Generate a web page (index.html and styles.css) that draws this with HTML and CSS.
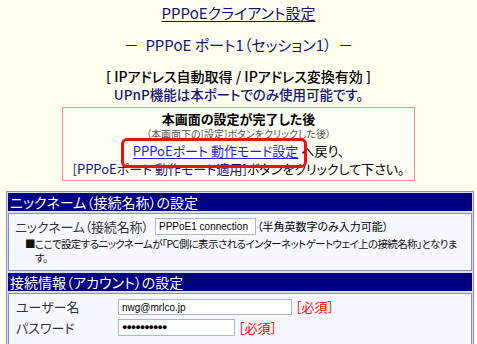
FILE: index.html
```html
<!DOCTYPE html>
<html lang="ja">
<head>
<meta charset="utf-8">
<title>PPPoEクライアント設定</title>
<link rel="stylesheet" href="styles.css">
</head>
<body>
<h1 class="title"><span class="ul">PPPoEクライアント設定</span></h1>
<p class="subtitle">－&nbsp; PPPoE ポート1（セッション1） &nbsp;－</p>
<div class="info">
  <p class="info-mode">[ IPアドレス自動取得 / IPアドレス変換有効 ]</p>
  <p class="info-upnp">UPnP機能は本ポートでのみ使用可能です。</p>
</div>
<div class="notice">
  <p class="notice-main">本画面の設定が完了した後</p>
  <p class="notice-sub">（本画面下の[設定]ボタンをクリックした後）</p>
  <p class="notice-link"><a href="#">PPPoEポート 動作モード設定</a> へ戻り、</p>
  <p class="notice-last"><span class="navy">[PPPoEポート 動作モード適用]</span>ボタンをクリックして下さい。</p>
  <div class="mark"></div>
</div>
<div class="panel">
  <div class="sec-head">ニックネーム（接続名称）の設定</div>
  <div class="sec-body body-nick">
    <div class="row nick-row">
      <span class="label nick-label">ニックネーム（接続名称）</span>
      <span class="input nick-input">PPPoE1 connection</span>
      <span class="hint">（半角英数字のみ入力可能）</span>
    </div>
    <p class="note">■ここで設定するニックネームが「PC側に表示されるインターネットゲートウェイ上の接続名称」となります。</p>
  </div>
  <div class="sec-head">接続情報（アカウント）の設定</div>
  <div class="sec-body body-acct">
    <div class="row acct-row">
      <span class="label acct-label">ユーザー名</span>
      <span class="input user-input">nwg@mrlco.jp</span>
      <span class="req">［必須］</span>
    </div>
    <div class="row acct-row">
      <span class="label acct-label">パスワード</span>
      <span class="input pw-input">●●●●●●●●●●</span>
      <span class="req">［必須］</span>
    </div>
  </div>
</div>
</body>
</html>
```

FILE: styles.css
```css
html, body {
  margin: 0;
  padding: 0;
}
body {
  background: #fffff0;
  font-family: "Noto Sans CJK JP", "Noto Sans", sans-serif;
  font-feature-settings: "palt";
  color: #000;
  font-size: 14px;
  overflow: hidden;
}
p, h1 {
  margin: 0;
}
.title {
  margin-top: 4px;
  font-size: 15px;
  font-weight: normal;
  line-height: 18px;
  text-align: center;
  color: #14146e;
}
.title .ul {
  text-decoration: underline;
  text-underline-offset: 2px;
}
.subtitle {
  margin-top: 14px;
  font-size: 15px;
  line-height: 18px;
  text-align: center;
  color: #14147a;
}
.info {
  margin-top: 13px;
  text-align: center;
  font-size: 14px;
  white-space: nowrap;
}
.info-mode {
  line-height: 18px;
  font-weight: 500;
}
.info-upnp {
  line-height: 19px;
  color: #14147a;
  font-weight: 500;
  font-size: 13.5px;
}
.notice {
  position: relative;
  width: 351px;
  margin: 3px auto 0;
  border: 1px solid #ff8c8c;
  background: #fffff6;
  padding: 2px 0 2px;
  text-align: center;
  white-space: nowrap;
}
.notice-main {
  line-height: 18px;
  font-size: 13px;
  font-weight: bold;
}
.notice-sub {
  line-height: 12px;
  font-size: 10px;
  color: #555;
}
.notice-link {
  margin-top: 2px;
  line-height: 18px;
  font-size: 13px;
}
.notice-link a {
  color: #1e1ef0;
  text-decoration: underline;
  text-underline-offset: 2px;
}
.notice-last {
  line-height: 18px;
  font-size: 13px;
}
.navy {
  color: #14147a;
}
.mark {
  position: absolute;
  left: 58px;
  top: 30px;
  width: 180px;
  height: 24px;
  border: 3px solid #f01010;
  border-radius: 6px;
}
.panel {
  margin: 10px 3px 0 6px;
  border: 1px solid #8c8cc4;
  padding: 1px;
  background: #dcdcf0;
  display: flex;
  flex-direction: column;
  gap: 2px;
}
.sec-head {
  height: 18px;
  line-height: 18px;
  background: #000080;
  color: #fff;
  font-size: 14px;
  padding-left: 2px;
  white-space: nowrap;
}
.sec-body {
  background: #f7f7ff;
  border: 1px solid #8c8cc4;
}
.body-nick {
  padding: 3px 0 5px;
}
.row {
  display: flex;
  align-items: center;
  white-space: nowrap;
}
.nick-row {
  height: 18px;
  padding-left: 6px;
}
.label {
  color: #333;
  font-size: 13px;
}
.nick-label {
  width: 140px;
  letter-spacing: -0.2px;
}
.input {
  box-sizing: border-box;
  display: inline-block;
  background: #fff;
  border: 1px solid #a8b8d0;
  font-family: "Liberation Sans", sans-serif;
  font-size: 10px;
  line-height: 15px;
  padding: 0 3px;
  color: #000;
}
.nick-input {
  width: 101px;
  height: 17px;
}
.hint {
  font-size: 11px;
  margin-left: 1px;
}
.note {
  margin-top: 2px;
  padding: 0 8px 0 26px;
  text-indent: -10px;
  font-size: 10.5px;
  letter-spacing: -0.6px;
  line-height: 14px;
  color: #111;
}
.body-acct {
  padding: 4px 0 10px;
  display: flex;
  flex-direction: column;
  gap: 4px;
}
.acct-row {
  height: 17px;
  padding-left: 7px;
}
.acct-label {
  width: 102px;
}
.user-input {
  width: 174px;
  height: 16px;
}
.pw-input {
  width: 117px;
  height: 17px;
  font-size: 9px;
  letter-spacing: -1px;
}
.req {
  color: #ff0000;
  font-size: 13px;
  margin-left: 3px;
}
```
